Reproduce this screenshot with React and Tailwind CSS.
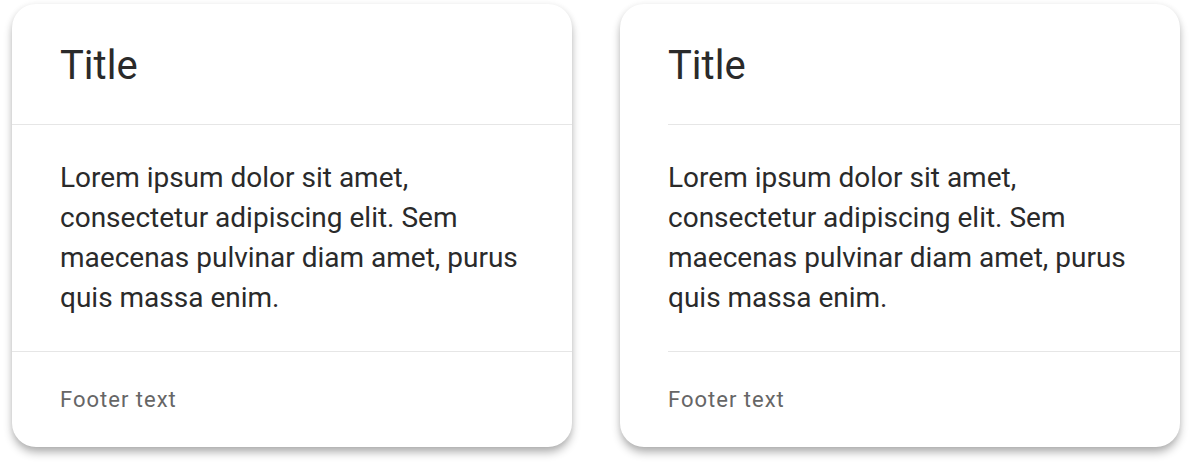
import React from 'react';

const body =
  'Lorem ipsum dolor sit amet, consectetur adipiscing elit. Sem maecenas pulvinar diam amet, purus quis massa enim.';

const Card = ({ inset }) => {
  const rule = inset ? 'ml-12 border-t border-[#e6e6e6]' : 'border-t border-[#e6e6e6]';
  return (
    <div className="w-[560px] h-[443px] bg-white rounded-[24px] shadow-[0_6px_10px_-1px_rgba(0,0,0,0.32),0_0_6px_rgba(0,0,0,0.06)] flex flex-col overflow-hidden">
      <div className="h-[120px] flex items-center px-12 pt-[3px]">
        <h2 className="text-[40px] leading-none text-[#2a2a2a]">Title</h2>
      </div>
      <div className={rule} />
      <div className="h-[226px] flex items-center px-12">
        <p className="text-[28px] leading-[40px] text-[#2a2a2a]">{body}</p>
      </div>
      <div className={rule} />
      <div className="flex-1 flex items-center px-12">
        <span className="text-[22px] tracking-[1px] text-[#666666]">Footer text</span>
      </div>
    </div>
  );
};

export default function App() {
  return (
    <div
      className="w-[1192px] h-[468px] bg-white flex gap-12 pl-3 pt-1"
      style={{ fontFamily: 'Roboto, "Liberation Sans", sans-serif' }}
    >
      <Card />
      <Card inset />
    </div>
  );
}
